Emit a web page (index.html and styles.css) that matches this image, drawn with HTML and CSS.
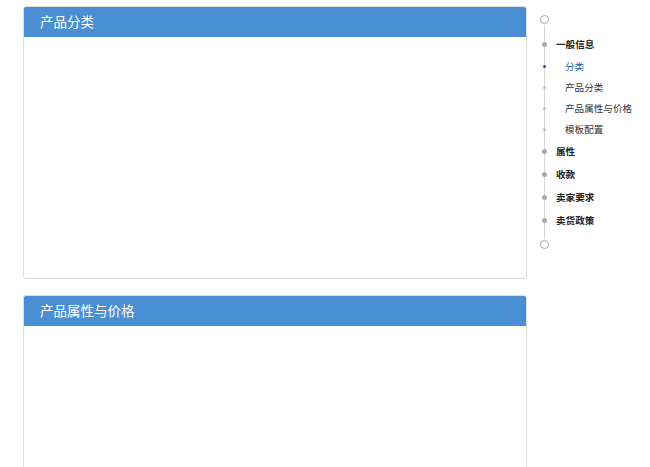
FILE: index.html
```html
<!DOCTYPE html>
<html lang="zh-CN">
<head>
  <meta charset="UTF-8">
  <title>产品发布</title>
  <link rel="stylesheet" href="styles.css">
</head>
<body>

  <div class="page">
    <main class="main">
      <section class="panel">
        <div class="panel-head">产品分类</div>
        <div class="panel-body tall"></div>
      </section>

      <section class="panel">
        <div class="panel-head">产品属性与价格</div>
        <div class="panel-body tall"></div>
      </section>
    </main>

    <!-- 右侧锚点导航 -->
    <aside class="anchor">
      <span class="ring"></span>
      <ul class="anchor-list">
        <li class="lv1">一般信息</li>
        <li class="lv2 active">分类</li>
        <li class="lv2">产品分类</li>
        <li class="lv2">产品属性与价格</li>
        <li class="lv2">模板配置</li>
        <li class="lv1">属性</li>
        <li class="lv1">收款</li>
        <li class="lv1">卖家要求</li>
        <li class="lv1">卖货政策</li>
      </ul>
      <span class="ring"></span>
    </aside>
  </div>

</body>
</html>
```

FILE: styles.css
```css
body {
  margin: 0;
  padding: 0;
  background: #ffffff;
  font-family: "Noto Sans CJK SC", "Microsoft YaHei", sans-serif;
  color: #333;
}

.page {
  display: flex;
  align-items: flex-start;
  padding: 6px 0 0 23px;
}

.main {
  width: 504px;
  display: flex;
  flex-direction: column;
  gap: 16px;
}

.panel {
  border: 1px solid #dcdcdc;
  border-radius: 3px;
  overflow: hidden;
  background: #fff;
}

.panel-head {
  background: #4a8fd4;
  color: #fff;
  font-size: 13.5px;
  height: 30px;
  line-height: 29px;
  padding-left: 16px;
}

.panel-body.tall {
  height: 241px;
}

/* anchor nav */
.anchor {
  margin-left: 13px;
  margin-top: 9px;
  position: relative;
  width: 100px;
}

.anchor::before {
  content: "";
  position: absolute;
  left: 4px;
  top: 10px;
  bottom: 10px;
  width: 1px;
  background: #d6d6d6;
}

.ring {
  position: relative;
  display: block;
  width: 7px;
  height: 7px;
  border: 1px solid #aaa;
  border-radius: 50%;
  background: #fff;
}

.anchor-list {
  list-style: none;
  margin: 0;
  padding: 9px 0 8px;
}

.anchor-list li {
  position: relative;
  font-size: 9.6px;
  white-space: nowrap;
}

.anchor-list li::before {
  content: "";
  position: absolute;
  border-radius: 50%;
  background: #aaa;
}

.lv1 {
  font-weight: bold;
  color: #222;
  padding-left: 16px;
  height: 23px;
  line-height: 23px;
}

.lv1::before {
  left: 2px;
  top: 9px;
  width: 5px;
  height: 5px;
}

.lv2 {
  color: #333;
  padding-left: 25px;
  height: 21px;
  line-height: 21px;
}

.lv2::before {
  left: 3px;
  top: 9px;
  width: 3px;
  height: 3px;
  background: #bdbdbd !important;
}

.lv2.active {
  color: #1f5fae;
}

.lv2.active::before {
  background: #1f4fa0 !important;
}
```
